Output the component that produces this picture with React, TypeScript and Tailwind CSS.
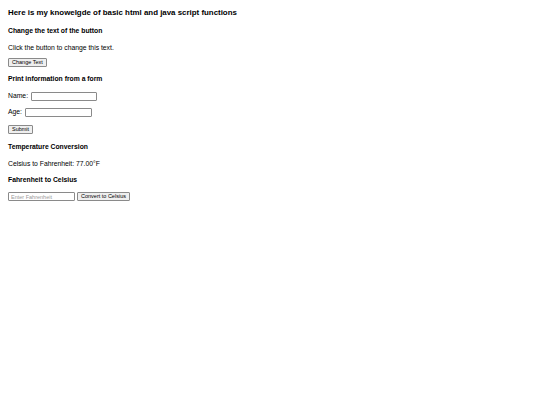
import React, { useState } from "react";

export default function App() {
  const [name, setName] = useState("");
  const [age, setAge] = useState("");
  const btn =
    "h-[9px] px-[3px] text-[5.5px] leading-none text-black bg-[#efefef] border border-[#8a8a8a] rounded-[1px] flex items-center";
  const inp = "h-[9px] border border-[#8a8a8a] rounded-[1px] bg-white text-[5.5px] px-[2px]";
  const head = "h-[8px] flex items-center text-[6.8px] font-bold leading-none";
  const para = "h-[8px] flex items-center text-[6.8px] leading-none";
  return (
    <div
      className="min-h-[405px] w-[540px] bg-white text-black px-[8px] flex flex-col items-start"
      style={{ fontFamily: '"Liberation Sans", Arial, sans-serif' }}
    >
      <h1 className="mt-[8px] h-[10px] flex items-center text-[7.9px] font-bold leading-none">
        Here is my knowelgde of basic html and java script functions
      </h1>
      <h2 className={`mt-[9px] ${head}`}>Change the text of the button</h2>
      <p className={`mt-[9px] ${para}`}>Click the button to change this text.</p>
      <button className={`mt-[6px] ${btn}`}>Change Text</button>
      <h2 className={`mt-[8px] ${head}`}>Print information from a form</h2>
      <div className="mt-[9px] h-[9px] flex items-center text-[6.8px] leading-none">
        <span>Name:</span>
        <input
          className={`ml-[3px] w-[66px] ${inp}`}
          value={name}
          onChange={(e) => setName(e.target.value)}
        />
      </div>
      <div className="mt-[7px] h-[9px] flex items-center text-[6.8px] leading-none">
        <span>Age:</span>
        <input
          className={`ml-[3px] w-[67px] ${inp}`}
          value={age}
          onChange={(e) => setAge(e.target.value)}
        />
      </div>
      <button className={`mt-[8px] ${btn}`}>Submit</button>
      <h2 className={`mt-[9px] ${head}`}>Temperature Conversion</h2>
      <p className={`mt-[9px] ${para}`}>Celsius to Fahrenheit: 77.00°F</p>
      <h2 className={`mt-[8px] ${head}`}>Fahrenheit to Celsius</h2>
      <div className="mt-[8px] h-[9px] flex items-center">
        <input
          className={`w-[67px] ${inp} placeholder:text-[#9a9a9a]`}
          placeholder="Enter Fahrenheit"
        />
        <button className={`ml-[2px] ${btn}`}>Convert to Celsius</button>
      </div>
    </div>
  );
}
